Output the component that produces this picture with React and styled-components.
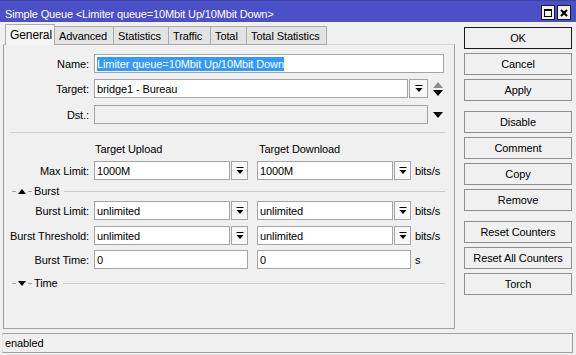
import React from "react";
import styled, { createGlobalStyle } from "styled-components";

const GlobalStyle = createGlobalStyle`
  html, body {
    margin: 0;
    padding: 0;
    background: #f0f0f0;
  }
  body {
    font-family: "Liberation Sans", Arial, sans-serif;
    font-size: 11px;
    letter-spacing: -0.1px;
    color: #000;
  }
`;

const Window = styled.div`
  width: 576px;
  height: 355px;
  display: flex;
  flex-direction: column;
  background: #f0f0f0;
  overflow: hidden;
`;

const TitleBar = styled.div`
  height: 21px;
  border-top: 1px solid #3b3f9e;
  background: #4b50c8;
  display: flex;
  align-items: center;
  justify-content: space-between;
  padding: 0 5px 0 5px;
`;

const Title = styled.div`
  color: #fff;
  font-size: 11px;
  letter-spacing: -0.15px;
  padding-top: 5px;
`;

const TitleButtons = styled.div`
  display: flex;
  gap: 2px;
  padding-top: 2px;
`;

const TitleBtn = styled.div`
  width: 12px;
  height: 13px;
  border: 1px solid #1a1a1a;
  background: #f0f0f0;
  display: flex;
  align-items: center;
  justify-content: center;
`;

const Body = styled.div`
  display: flex;
  align-items: flex-start;
  padding: 2px 0 0 3px;
`;

const Left = styled.div`
  width: 452px;
  display: flex;
  flex-direction: column;
`;

const Tabs = styled.div`
  display: flex;
  align-items: flex-end;
  height: 21px;
  padding-left: 2px;
  margin-bottom: -1px;
  position: relative;
  z-index: 1;
`;

const Tab = styled.div`
  box-sizing: border-box;
  width: ${(p) => p.$w}px;
  height: ${(p) => (p.$active ? 21 : 19)}px;
  padding-left: 4px;
  padding-top: ${(p) => (p.$active ? 0 : 1)}px;
  display: flex;
  align-items: center;
  border: 1px solid #acacac;
  border-bottom: ${(p) => (p.$active ? "none" : "1px solid #acacac")};
  margin-left: ${(p) => (p.$first ? 0 : -1)}px;
  background: ${(p) => (p.$active ? "#f4f4f4" : "#e3e3e3")};
  font-size: ${(p) => (p.$active ? 12 : 11)}px;
  white-space: nowrap;
`;

const Panel = styled.div`
  box-sizing: border-box;
  height: 285px;
  border: 1px solid #a0a0a0;
  border-top-color: #d4d4d4;
  display: flex;
  flex-direction: column;
`;

const Row = styled.div`
  display: flex;
  align-items: center;
  height: 19px;
  margin-top: ${(p) => p.$mt}px;
`;

const Label = styled.div`
  width: 85px;
  margin-right: 5px;
  text-align: right;
  white-space: nowrap;
`;

const Input = styled.div`
  box-sizing: border-box;
  width: ${(p) => p.$w}px;
  height: 19px;
  border: 1px solid #a5a5a5;
  background: ${(p) => (p.$disabled ? "#f0f0f0" : "#fff")};
  padding-left: 2px;
  display: flex;
  align-items: center;
  white-space: nowrap;
  overflow: hidden;
`;

const Selected = styled.span`
  background: #3399ff;
  color: #fff;
  line-height: 14px;
`;

const DropBtn = styled.div`
  box-sizing: border-box;
  width: ${(p) => p.$w || 17}px;
  height: 19px;
  margin-left: 1px;
  border: 1px solid #a5a5a5;
  background: #f7f7f7;
  display: flex;
  align-items: center;
  justify-content: center;
`;

const Combo = styled.div`
  display: flex;
  margin-right: ${(p) => p.$mr || 0}px;
`;

const Unit = styled.div`
  margin-left: 4px;
`;

const SideIcon = styled.div`
  width: 10px;
  margin-left: 5px;
  display: flex;
  justify-content: center;
`;

const Separator = styled.div`
  height: 1px;
  background: #d0d0d0;
  margin: ${(p) => p.$mt}px 9px 0 6px;
`;

const ColHead = styled.div`
  width: ${(p) => p.$w}px;
  padding-left: 1px;
`;

const Section = styled.div`
  display: flex;
  align-items: center;
  height: 14px;
  margin-top: ${(p) => p.$mt}px;
  padding: 0 9px 0 6px;
`;

const Dash = styled.div`
  width: ${(p) => p.$w}px;
  height: 1px;
  background: #a0a0a0;
  margin: 0 2px;
`;

const SectionRule = styled.div`
  flex: 1;
  height: 1px;
  background: #c8c8c8;
  margin-left: 5px;
`;

const Side = styled.div`
  margin-left: 9px;
  width: 108px;
  padding-top: 3px;
  display: flex;
  flex-direction: column;
`;

const Button = styled.div`
  box-sizing: border-box;
  height: 22px;
  margin-top: ${(p) => p.$mt}px;
  border: 1px solid ${(p) => (p.$default ? "#1a1a1a" : "#8f8f8f")};
  background: #f0f0f0;
  display: flex;
  align-items: center;
  justify-content: center;
  font-size: 11px;
  white-space: nowrap;
`;

const StatusBar = styled.div`
  box-sizing: border-box;
  height: 20px;
  margin: 4px 3px 0 2px;
  border: 1px solid #a0a0a0;
  border-left-color: #e0e0e0;
  padding-left: 2px;
  display: flex;
  align-items: center;
  font-size: 11px;
`;

const DropIcon = () => (
  <svg width="8" height="8" viewBox="0 0 8 8">
    <rect x="0.5" y="0" width="7" height="1" fill="#000" />
    <polygon points="0.5,3 7.5,3 4,7" fill="#000" />
  </svg>
);

const DownTri = ({ color = "#000" }) => (
  <svg width="10" height="6" viewBox="0 0 10 6">
    <polygon points="0,0 10,0 5,6" fill={color} />
  </svg>
);

const UpTri = ({ color = "#000", w = 10, h = 6 }) => (
  <svg width={w} height={h} viewBox="0 0 10 6">
    <polygon points="0,6 10,6 5,0" fill={color} />
  </svg>
);

const UpDown = () => (
  <svg width="10" height="14" viewBox="0 0 10 14">
    <polygon points="0,6 10,6 5,0" fill="#8a8f8a" />
    <polygon points="0,8 10,8 5,14" fill="#000" />
  </svg>
);

const ComboField = ({ value, mr }) => (
  <Combo $mr={mr}>
    <Input $w={136}>{value}</Input>
    <DropBtn>
      <DropIcon />
    </DropBtn>
  </Combo>
);

const tabs = [
  ["General", 50],
  ["Advanced", 60],
  ["Statistics", 56],
  ["Traffic", 43],
  ["Total", 37],
  ["Total Statistics", 81],
];

export default function App() {
  return (
    <Window>
      <GlobalStyle />
      <TitleBar>
        <Title>Simple Queue &lt;Limiter queue=10Mbit Up/10Mbit Down&gt;</Title>
        <TitleButtons>
          <TitleBtn>
            <svg width="8" height="8" viewBox="0 0 8 8">
              <rect x="0.5" y="0.5" width="7" height="7" fill="none" stroke="#000" />
              <rect x="0" y="0" width="8" height="2" fill="#000" />
            </svg>
          </TitleBtn>
          <TitleBtn>
            <svg width="8" height="8" viewBox="0 0 8 8">
              <path d="M1 1 L7 7 M7 1 L1 7" stroke="#000" strokeWidth="2" />
            </svg>
          </TitleBtn>
        </TitleButtons>
      </TitleBar>

      <Body>
        <Left>
          <Tabs>
            {tabs.map(([name, w], i) => (
              <Tab key={name} $w={w} $active={i === 0} $first={i === 0}>
                {name}
              </Tab>
            ))}
          </Tabs>
          <Panel>
            <Row $mt={9}>
              <Label>Name:</Label>
              <Input $w={350}>
                <Selected>Limiter queue=10Mbit Up/10Mbit Down</Selected>
              </Input>
            </Row>
            <Row $mt={6}>
              <Label>Target:</Label>
              <Input $w={314}>bridge1 - Bureau</Input>
              <DropBtn $w={19}>
                <DropIcon />
              </DropBtn>
              <SideIcon>
                <UpDown />
              </SideIcon>
            </Row>
            <Row $mt={7}>
              <Label>Dst.:</Label>
              <Input $w={334} $disabled />
              <SideIcon>
                <DownTri />
              </SideIcon>
            </Row>

            <Separator $mt={8} />

            <Row $mt={6}>
              <Label />
              <ColHead $w={163}>Target Upload</ColHead>
              <ColHead $w={150}>Target Download</ColHead>
            </Row>
            <Row $mt={3}>
              <Label>Max Limit:</Label>
              <ComboField value="1000M" mr={9} />
              <ComboField value="1000M" />
              <Unit>bits/s</Unit>
            </Row>

            <Section $mt={4}>
              <Dash $w={4} />
              <UpTri w={8} h={5} />
              <Dash $w={4} />
              <span>Burst</span>
              <SectionRule />
            </Section>

            <Row $mt={3}>
              <Label>Burst Limit:</Label>
              <ComboField value="unlimited" mr={9} />
              <ComboField value="unlimited" />
              <Unit>bits/s</Unit>
            </Row>
            <Row $mt={6}>
              <Label>Burst Threshold:</Label>
              <ComboField value="unlimited" mr={9} />
              <ComboField value="unlimited" />
              <Unit>bits/s</Unit>
            </Row>
            <Row $mt={5}>
              <Label>Burst Time:</Label>
              <Combo $mr={9}>
                <Input $w={154}>0</Input>
              </Combo>
              <Input $w={154}>0</Input>
              <Unit>s</Unit>
            </Row>

            <Section $mt={7}>
              <Dash $w={4} />
              <svg width="8" height="5" viewBox="0 0 10 6">
                <polygon points="0,0 10,0 5,6" fill="#000" />
              </svg>
              <Dash $w={4} />
              <span>Time</span>
              <SectionRule />
            </Section>
          </Panel>
        </Left>

        <Side>
          <Button $mt={0} $default>OK</Button>
          <Button $mt={4}>Cancel</Button>
          <Button $mt={4}>Apply</Button>
          <Button $mt={10}>Disable</Button>
          <Button $mt={4}>Comment</Button>
          <Button $mt={4}>Copy</Button>
          <Button $mt={4}>Remove</Button>
          <Button $mt={10}>Reset Counters</Button>
          <Button $mt={4}>Reset All Counters</Button>
          <Button $mt={4}>Torch</Button>
        </Side>
      </Body>

      <StatusBar>enabled</StatusBar>
    </Window>
  );
}
